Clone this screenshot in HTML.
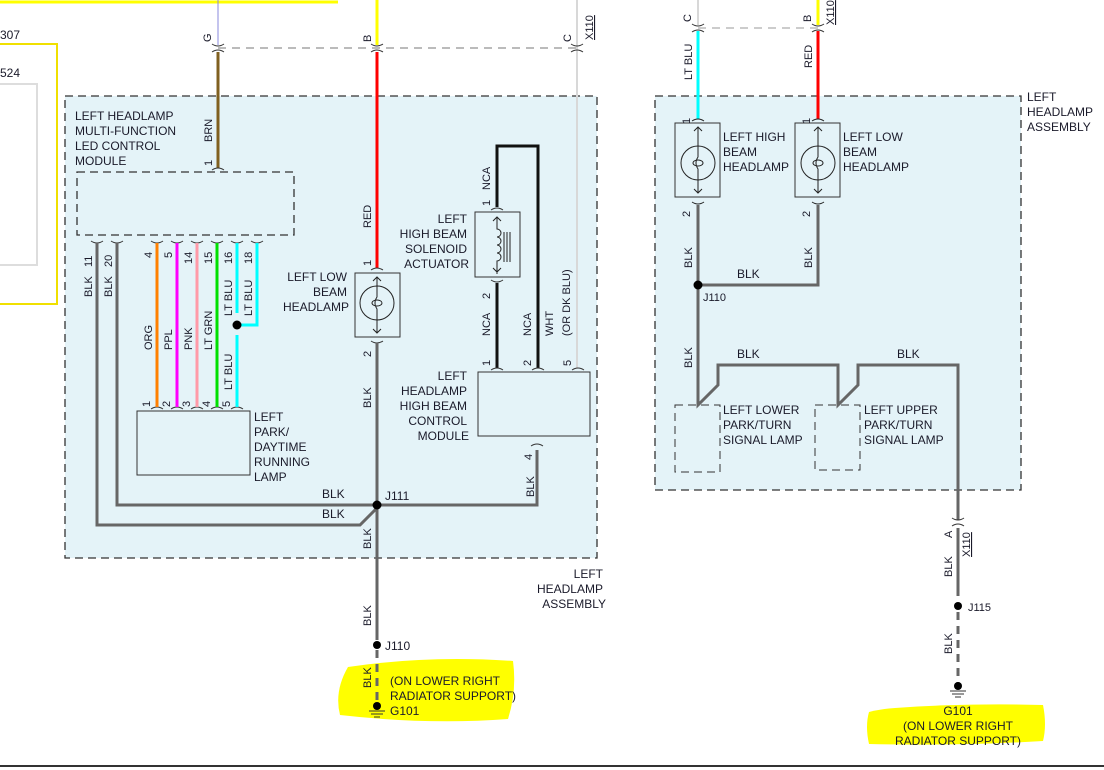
<!DOCTYPE html>
<html><head><meta charset="utf-8"><style>
html,body{margin:0;padding:0;background:#fff;width:1104px;height:770px;overflow:hidden}
svg{display:block}
text{font-family:"Liberation Sans",sans-serif;font-size:12px;fill:#1a1a2a}
.s{font-size:11px}
</style></head><body>
<svg width="1104" height="770" viewBox="0 0 1104 770" xmlns="http://www.w3.org/2000/svg">
<line x1="0" y1="2" x2="338" y2="2" stroke="#ffff00" stroke-width="3"/>
<polyline points="0,44 57,44 57,304 0,304" fill="none" stroke="#f0e000" stroke-width="2"/>
<rect x="-2" y="84" width="39" height="181" fill="none" stroke="#ddd" stroke-width="2"/>
<text x="0" y="39">307</text><text x="0" y="77">524</text>

<rect x="65" y="96" width="532" height="462" fill="#e4f3f8" stroke="#333" stroke-dasharray="8,5" stroke-width="1.3"/>
<rect x="655" y="96" width="366" height="394" fill="#e4f3f8" stroke="#333" stroke-dasharray="8,5" stroke-width="1.3"/>

<line x1="218" y1="48" x2="577" y2="48" stroke="#777" stroke-dasharray="8,6"/>
<line x1="698" y1="28" x2="818" y2="28" stroke="#999" stroke-dasharray="8,6"/>

<line x1="218" y1="0" x2="218" y2="45" stroke="#8888dd" stroke-width="1"/>
<line x1="218" y1="52" x2="218" y2="168" stroke="#806020" stroke-width="3"/>
<line x1="377" y1="0" x2="377" y2="45" stroke="#ffff00" stroke-width="3"/>
<line x1="377" y1="52" x2="377" y2="268" stroke="#f00" stroke-width="3"/>
<line x1="577" y1="0" x2="577" y2="368" stroke="#d8d8d8" stroke-width="2"/>
<g fill="none" stroke="#333" stroke-width="1">
<path d="M212,44 q6,4 12,0 M212,52 q6,-4 12,0"/>
<path d="M371,44 q6,4 12,0 M371,52 q6,-4 12,0"/>
<path d="M571,44 q6,4 12,0 M571,52 q6,-4 12,0"/>
<path d="M692,24 q6,4 12,0 M692,32 q6,-4 12,0"/>
<path d="M812,24 q6,4 12,0 M812,32 q6,-4 12,0"/>
</g>
<text class="s" transform="translate(211,42) rotate(-90)">G</text>
<text class="s" transform="translate(371,42) rotate(-90)">B</text>
<text class="s" transform="translate(571,42) rotate(-90)">C</text>
<text class="s" text-decoration="underline" transform="translate(593,40) rotate(-90)">X110</text>
<text class="s" transform="translate(691,22) rotate(-90)">C</text>
<text class="s" transform="translate(811,22) rotate(-90)">B</text>
<text class="s" text-decoration="underline" transform="translate(834,25) rotate(-90)">X110</text>

<text x="75" y="120">LEFT HEADLAMP</text><text x="75" y="135">MULTI-FUNCTION</text><text x="75" y="150">LED CONTROL</text><text x="75" y="165">MODULE</text>
<rect x="77" y="172" width="217" height="63" fill="none" stroke="#333" stroke-dasharray="8,5" stroke-width="1.3"/>
<path d="M212,170 q6,-4 12,0" fill="none" stroke="#333"/>
<text class="s" transform="translate(212,142) rotate(-90)">BRN</text>
<text class="s" transform="translate(212,166) rotate(-90)">1</text>

<g fill="none" stroke="#333">
<path d="M91,241 q6,4 12,0 M111,241 q6,4 12,0 M151,241 q6,4 12,0 M171,241 q6,4 12,0 M191,241 q6,4 12,0 M211,241 q6,4 12,0 M231,241 q6,4 12,0 M251,241 q6,4 12,0"/>
<path d="M151,409 q6,-4 12,0 M171,409 q6,-4 12,0 M191,409 q6,-4 12,0 M211,409 q6,-4 12,0 M231,409 q6,-4 12,0"/>
</g>
<polyline points="97,243 97,525 360,525 377,508" fill="none" stroke="#666" stroke-width="3"/>
<polyline points="117,243 117,505 537,505 537,450" fill="none" stroke="#666" stroke-width="3"/>
<line x1="157" y1="243" x2="157" y2="407" stroke="#ff8000" stroke-width="3"/>
<line x1="177" y1="243" x2="177" y2="407" stroke="#ff00ff" stroke-width="3"/>
<line x1="197" y1="243" x2="197" y2="407" stroke="#ff9aa8" stroke-width="3"/>
<line x1="217" y1="243" x2="217" y2="407" stroke="#00e000" stroke-width="3"/>
<line x1="237" y1="243" x2="237" y2="313" stroke="#00ffff" stroke-width="3"/>
<line x1="237" y1="335" x2="237" y2="407" stroke="#00ffff" stroke-width="3"/>
<polyline points="257,243 257,325 241,325" fill="none" stroke="#00ffff" stroke-width="3"/>
<circle cx="237" cy="325" r="4.5" fill="#000"/>
<text class="s" transform="translate(92,267) rotate(-90)">11</text>
<text class="s" transform="translate(112,267) rotate(-90)">20</text>
<text class="s" transform="translate(152,258) rotate(-90)">4</text>
<text class="s" transform="translate(172,258) rotate(-90)">5</text>
<text class="s" transform="translate(192,264) rotate(-90)">14</text>
<text class="s" transform="translate(212,264) rotate(-90)">15</text>
<text class="s" transform="translate(232,264) rotate(-90)">16</text>
<text class="s" transform="translate(252,264) rotate(-90)">18</text>
<text class="s" transform="translate(92,297) rotate(-90)">BLK</text>
<text class="s" transform="translate(112,297) rotate(-90)">BLK</text>
<text class="s" transform="translate(152,350) rotate(-90)">ORG</text>
<text class="s" transform="translate(172,350) rotate(-90)">PPL</text>
<text class="s" transform="translate(192,350) rotate(-90)">PNK</text>
<text class="s" transform="translate(212,350) rotate(-90)">LT GRN</text>
<text class="s" transform="translate(232,316) rotate(-90)">LT BLU</text>
<text class="s" transform="translate(252,316) rotate(-90)">LT BLU</text>
<text class="s" transform="translate(232,390) rotate(-90)">LT BLU</text>
<text class="s" transform="translate(150,407) rotate(-90)">1</text>
<text class="s" transform="translate(170,407) rotate(-90)">2</text>
<text class="s" transform="translate(190,407) rotate(-90)">3</text>
<text class="s" transform="translate(210,407) rotate(-90)">4</text>
<text class="s" transform="translate(230,407) rotate(-90)">5</text>
<rect x="137" y="411" width="113" height="64" fill="none" stroke="#333"/>
<text x="254" y="421">LEFT</text><text x="254" y="436">PARK/</text><text x="254" y="451">DAYTIME</text><text x="254" y="466">RUNNING</text><text x="254" y="481">LAMP</text>

<rect x="355" y="273" width="45" height="64" fill="none" stroke="#333"/>
<circle cx="377" cy="303" r="17" fill="none" stroke="#222"/>
<path d="M377,277 v20 q-4,6 0,12 v24 M373,281 l4,-4 4,4 M373,329 l4,4 4,-4 M372,303 a5,3 0 1,0 10,0 a5,3 0 1,0 -10,0" fill="none" stroke="#222"/>
<path d="M371,270 q6,-4 12,0 M371,341 q6,4 12,0" fill="none" stroke="#333"/>
<text class="s" transform="translate(371,266) rotate(-90)">1</text>
<text class="s" transform="translate(371,357) rotate(-90)">2</text>
<text class="s" transform="translate(371,228) rotate(-90)">RED</text>
<text x="347" y="281" text-anchor="end">LEFT LOW</text><text x="347" y="296" text-anchor="end">BEAM</text><text x="349" y="311" text-anchor="end">HEADLAMP</text>
<line x1="377" y1="343" x2="377" y2="640" stroke="#666" stroke-width="3"/>
<text class="s" transform="translate(371,408) rotate(-90)">BLK</text>
<text class="s" transform="translate(371,549) rotate(-90)">BLK</text>
<text class="s" transform="translate(371,626) rotate(-90)">BLK</text>
<circle cx="377" cy="505" r="4.5" fill="#000"/>
<text x="385" y="500">J111</text>
<text x="322" y="498">BLK</text><text x="322" y="518">BLK</text>
<text class="s" transform="translate(534,497) rotate(-90)">BLK</text>
<text class="s" transform="translate(532,460) rotate(-90)">4</text>
<path d="M531,446 q6,-4 12,0" fill="none" stroke="#333"/>

<polyline points="497,207 497,146 538,146 538,368" fill="none" stroke="#111" stroke-width="3"/>
<line x1="497" y1="283" x2="497" y2="368" stroke="#111" stroke-width="3"/>
<rect x="475" y="212" width="45" height="65" fill="none" stroke="#333"/>
<path d="M497,217 v12 a3,3 0 0,1 0,8 a3,3 0 0,1 0,8 a3,3 0 0,1 0,8 a3,3 0 0,1 0,8 v13 M493,221 l4,-4 4,4 M493,268 l4,4 4,-4 M504,232 v30 M507,232 v30 M510,232 v30" fill="none" stroke="#222"/>
<path d="M491,210 q6,-4 12,0 M491,280 q6,4 12,0" fill="none" stroke="#333"/>
<text class="s" transform="translate(490,190) rotate(-90)">NCA</text>
<text class="s" transform="translate(490,206) rotate(-90)">1</text>
<text class="s" transform="translate(490,299) rotate(-90)">2</text>
<text class="s" transform="translate(490,336) rotate(-90)">NCA</text>
<text class="s" transform="translate(531,336) rotate(-90)">NCA</text>
<text class="s" transform="translate(553,336) rotate(-90)">WHT</text>
<text class="s" transform="translate(570,336) rotate(-90)">(OR DK BLU)</text>
<text x="467" y="223" text-anchor="end">LEFT</text><text x="467" y="238" text-anchor="end">HIGH BEAM</text><text x="467" y="253" text-anchor="end">SOLENOID</text><text x="469" y="268" text-anchor="end">ACTUATOR</text>
<rect x="478" y="372" width="112" height="64" fill="none" stroke="#333"/>
<path d="M491,370 q6,-4 12,0 M532,370 q6,-4 12,0 M572,370 q6,-4 12,0" fill="none" stroke="#333"/>
<text class="s" transform="translate(490,366) rotate(-90)">1</text>
<text class="s" transform="translate(531,366) rotate(-90)">2</text>
<text class="s" transform="translate(571,366) rotate(-90)">5</text>
<text x="467" y="380" text-anchor="end">LEFT</text><text x="467" y="395" text-anchor="end">HEADLAMP</text><text x="467" y="410" text-anchor="end">HIGH BEAM</text><text x="467" y="425" text-anchor="end">CONTROL</text><text x="469" y="440" text-anchor="end">MODULE</text>
<text x="603" y="578" text-anchor="end">LEFT</text><text x="603" y="593" text-anchor="end">HEADLAMP</text><text x="606" y="608" text-anchor="end">ASSEMBLY</text>

<path d="M348,667 q80,-12 165,-6 q4,30 -5,58 q-80,6 -168,-4 q-6,-24 8,-48z" fill="#ffff00"/>
<line x1="377" y1="650" x2="377" y2="702" stroke="#666" stroke-width="3" stroke-dasharray="8,6"/>
<text class="s" transform="translate(371,688) rotate(-90)">BLK</text>
<circle cx="377" cy="645" r="4" fill="#000"/>
<text x="385" y="650">J110</text>
<circle cx="377" cy="706" r="4" fill="#000"/>
<path d="M369,711 h16 M371,714 h12 M374,717 h6" stroke="#333"/>
<text x="390" y="685">(ON LOWER RIGHT</text><text x="390" y="700">RADIATOR SUPPORT)</text><text x="390" y="715">G101</text>

<line x1="698" y1="0" x2="698" y2="25" stroke="#d8d8d8" stroke-width="2"/>
<line x1="698" y1="31" x2="698" y2="119" stroke="#00ffff" stroke-width="3"/>
<line x1="818" y1="0" x2="818" y2="25" stroke="#ffff00" stroke-width="3"/>
<line x1="818" y1="31" x2="818" y2="119" stroke="#f00" stroke-width="3"/>
<text class="s" transform="translate(692,80) rotate(-90)">LT BLU</text>
<text class="s" transform="translate(812,68) rotate(-90)">RED</text>
<text x="1027" y="101">LEFT</text><text x="1027" y="116">HEADLAMP</text><text x="1027" y="131">ASSEMBLY</text>
<g fill="none" stroke="#222">
<rect x="675" y="123" width="45" height="74" stroke="#333"/>
<circle cx="698" cy="163" r="17"/>
<path d="M698,127 v30 q-4,6 0,12 v24 M694,131 l4,-4 4,4 M694,189 l4,4 4,-4 M693,163 a5,3 0 1,0 10,0 a5,3 0 1,0 -10,0"/>
<rect x="795" y="123" width="45" height="74" stroke="#333"/>
<circle cx="818" cy="163" r="17"/>
<path d="M818,127 v30 q-4,6 0,12 v24 M814,131 l4,-4 4,4 M814,189 l4,4 4,-4 M813,163 a5,3 0 1,0 10,0 a5,3 0 1,0 -10,0"/>
<path d="M692,121 q6,-4 12,0 M812,121 q6,-4 12,0 M692,202 q6,4 12,0 M812,202 q6,4 12,0"/>
</g>
<text class="s" transform="translate(690,124) rotate(-90)">1</text>
<text class="s" transform="translate(810,124) rotate(-90)">1</text>
<text class="s" transform="translate(690,217) rotate(-90)">2</text>
<text class="s" transform="translate(810,217) rotate(-90)">2</text>
<text x="723" y="141">LEFT HIGH</text><text x="723" y="156">BEAM</text><text x="723" y="171">HEADLAMP</text>
<text x="843" y="141">LEFT LOW</text><text x="843" y="156">BEAM</text><text x="843" y="171">HEADLAMP</text>
<polyline points="698,205 698,405 718,385 718,365 838,365 838,405 858,385 858,365 958,365 958,520" fill="none" stroke="#666" stroke-width="3"/>
<polyline points="698,285 818,285 818,205" fill="none" stroke="#666" stroke-width="3"/>
<circle cx="698" cy="285" r="4.5" fill="#000"/>
<text x="703" y="301" class="s">J110</text>
<text class="s" transform="translate(692,268) rotate(-90)">BLK</text>
<text class="s" transform="translate(812,268) rotate(-90)">BLK</text>
<text x="737" y="278">BLK</text>
<text class="s" transform="translate(692,368) rotate(-90)">BLK</text>
<text x="737" y="358">BLK</text><text x="897" y="358">BLK</text>
<rect x="675" y="405" width="45" height="67" fill="none" stroke="#333" stroke-dasharray="8,5"/>
<rect x="815" y="405" width="45" height="65" fill="none" stroke="#333" stroke-dasharray="8,5"/>
<text x="723" y="414">LEFT LOWER</text><text x="723" y="429">PARK/TURN</text><text x="723" y="444">SIGNAL LAMP</text>
<text x="864" y="414">LEFT UPPER</text><text x="864" y="429">PARK/TURN</text><text x="864" y="444">SIGNAL LAMP</text>
<path d="M952,518 q6,4 12,0 M952,526 q6,-4 12,0" fill="none" stroke="#333"/>
<line x1="958" y1="528" x2="958" y2="596" stroke="#666" stroke-width="3"/>
<line x1="958" y1="612" x2="958" y2="684" stroke="#666" stroke-width="3" stroke-dasharray="8,6"/>
<text class="s" transform="translate(952,538) rotate(-90)">A</text>
<text class="s" text-decoration="underline" transform="translate(970,557) rotate(-90)">X110</text>
<text class="s" transform="translate(952,577) rotate(-90)">BLK</text>
<text class="s" transform="translate(952,654) rotate(-90)">BLK</text>
<circle cx="958" cy="606" r="4" fill="#000"/>
<text x="968" y="611" class="s">J115</text>
<circle cx="958" cy="686" r="4" fill="#000"/>
<path d="M950,691 h16 M952,694 h12 M955,697 h6" stroke="#333"/>
<path d="M895,708 q70,-5 148,-3 q4,20 0,36 q-80,5 -174,3 q-4,-18 0,-32 q12,-3 26,-4z" fill="#ffff00"/>
<text x="958" y="715" text-anchor="middle">G101</text>
<text x="958" y="730" text-anchor="middle">(ON LOWER RIGHT</text>
<text x="958" y="745" text-anchor="middle">RADIATOR SUPPORT)</text>

<line x1="0" y1="766" x2="1104" y2="766" stroke="#333" stroke-width="2"/>
</svg>
</body></html>
